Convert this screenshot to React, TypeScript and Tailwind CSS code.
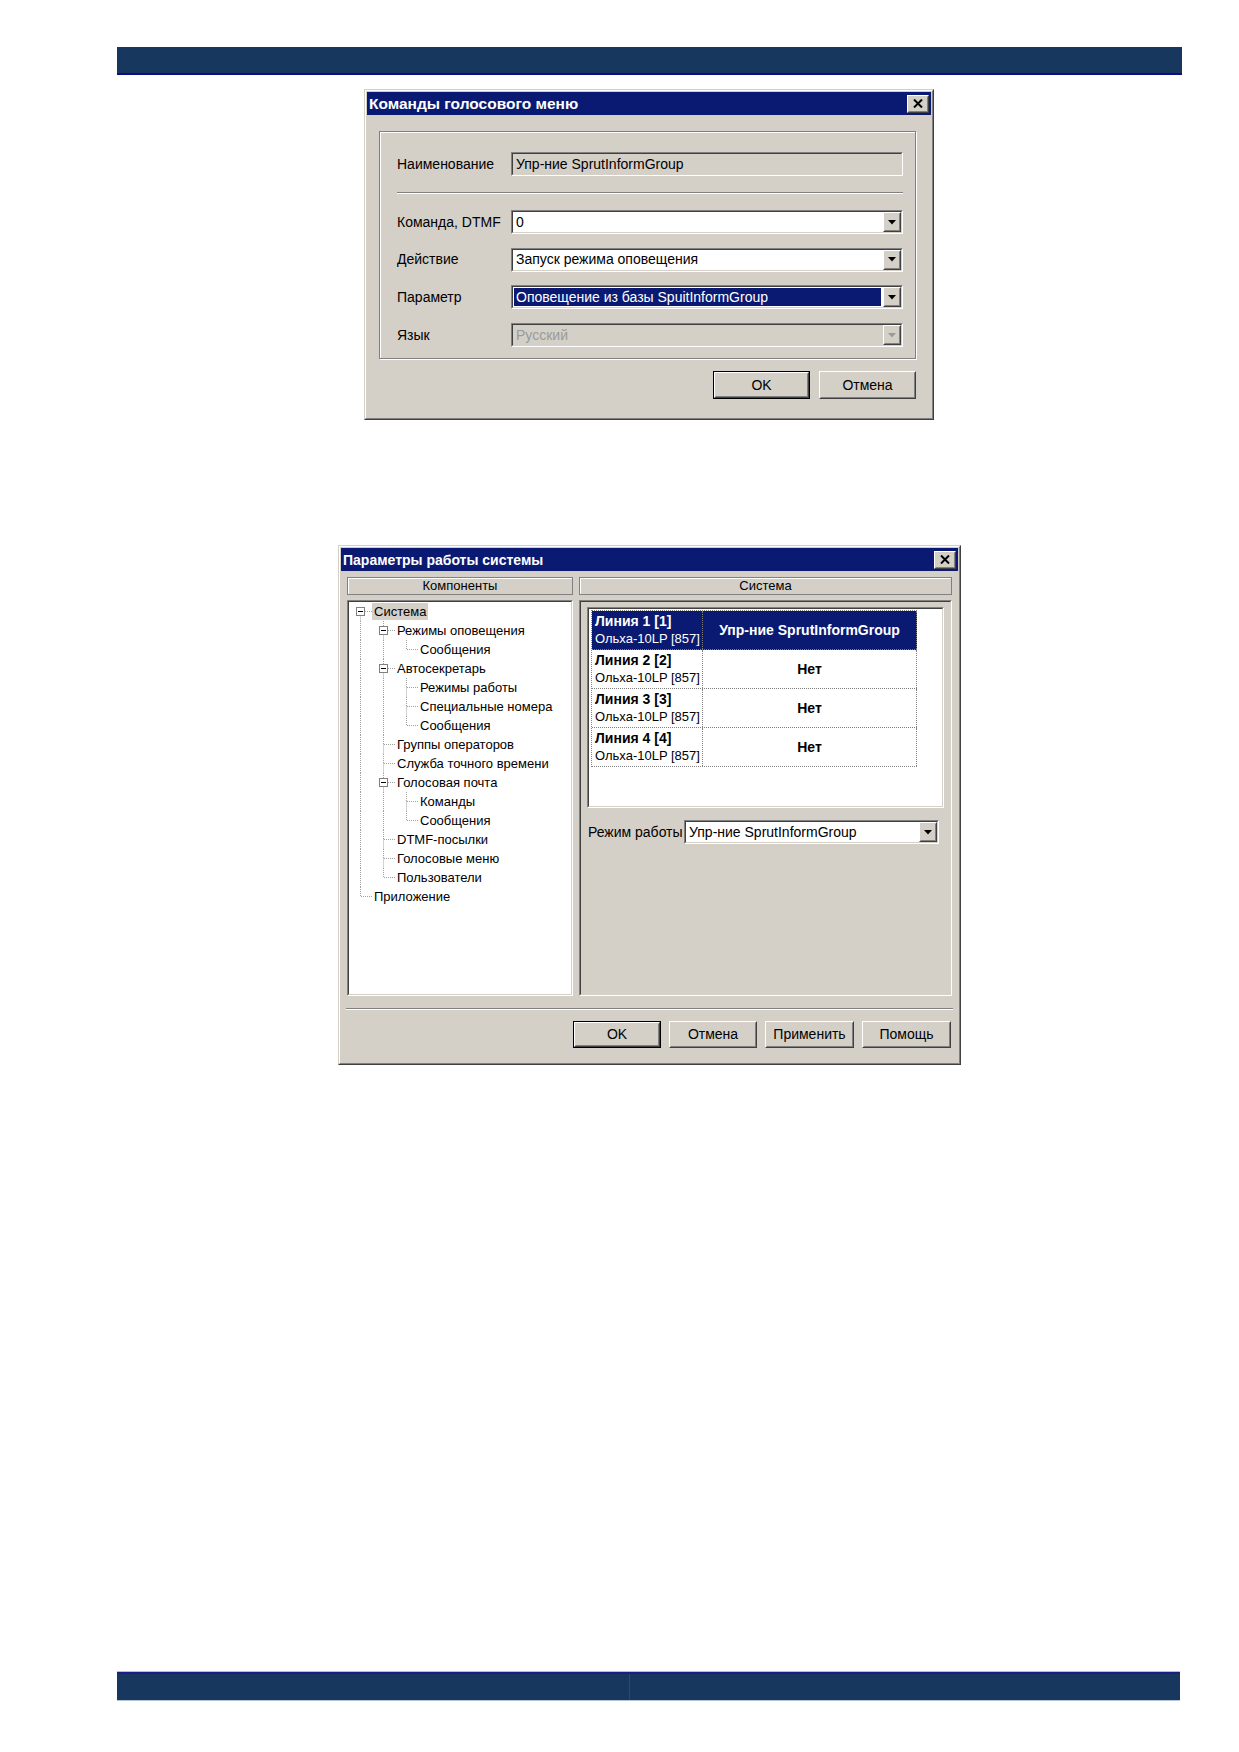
import React from 'react';

type TreeNode = { text: string; level: number; box?: boolean; first?: boolean; last?: boolean; lines: boolean[]; selected?: boolean };

const treeNodes: TreeNode[] = [
  { text: 'Система', level: 0, box: true, first: true, lines: [], selected: true },
  { text: 'Режимы оповещения', level: 1, box: true, lines: [true] },
  { text: 'Сообщения', level: 2, last: true, lines: [true, true] },
  { text: 'Автосекретарь', level: 1, box: true, lines: [true] },
  { text: 'Режимы работы', level: 2, lines: [true, true] },
  { text: 'Специальные номера', level: 2, lines: [true, true] },
  { text: 'Сообщения', level: 2, last: true, lines: [true, true] },
  { text: 'Группы операторов', level: 1, lines: [true] },
  { text: 'Служба точного времени', level: 1, lines: [true] },
  { text: 'Голосовая почта', level: 1, box: true, lines: [true] },
  { text: 'Команды', level: 2, lines: [true, true] },
  { text: 'Сообщения', level: 2, last: true, lines: [true, true] },
  { text: 'DTMF-посылки', level: 1, lines: [true] },
  { text: 'Голосовые меню', level: 1, lines: [true] },
  { text: 'Пользователи', level: 1, last: true, lines: [true] },
  { text: 'Приложение', level: 0, last: true, lines: [] },
];

const lines = [
  { name: 'Линия 1 [1]', mode: 'Упр-ние SprutInformGroup' },
  { name: 'Линия 2 [2]', mode: 'Нет' },
  { name: 'Линия 3 [3]', mode: 'Нет' },
  { name: 'Линия 4 [4]', mode: 'Нет' },
];

// classic 3d frames, two nested 1px borders each
function Raised({ className = '', children }: { className?: string; children?: React.ReactNode }) {
  return (
    <div className={`border border-t-white border-l-white border-r-[#404040] border-b-[#404040] ${className}`}>
      <div className="h-full w-full border border-t-[#d4d0c8] border-l-[#d4d0c8] border-r-[#808080] border-b-[#808080] flex items-center justify-center">
        {children}
      </div>
    </div>
  );
}

function Sunken({ className = '', inner = '', children }: { className?: string; inner?: string; children?: React.ReactNode }) {
  return (
    <div className={`border border-t-[#808080] border-l-[#808080] border-b-white border-r-white ${className}`}>
      <div className={`h-full w-full border border-t-[#404040] border-l-[#404040] border-b-[#d4d0c8] border-r-[#d4d0c8] ${inner}`}>
        {children}
      </div>
    </div>
  );
}

function Window({ title, titleSize, className = '', children }: { title: string; titleSize: string; className?: string; children: React.ReactNode }) {
  return (
    <div className={`bg-[#d4d0c8] border border-t-[#d4d0c8] border-l-[#d4d0c8] border-r-[#404040] border-b-[#404040] ${className}`}>
      <div className="h-full border border-t-white border-l-white border-r-[#808080] border-b-[#808080] p-px flex flex-col">
        <div className="h-[23px] shrink-0 bg-[#0a1a72] flex items-center justify-between pl-[2px] pr-[2px]">
          <span className={`text-white font-bold leading-none ${titleSize}`}>{title}</span>
          <Raised className="w-[22px] h-[18px] bg-[#d4d0c8]">
            <svg width="10" height="9" viewBox="0 0 10 9">
              <path d="M1 0.5 L9 8.5 M9 0.5 L1 8.5" stroke="#000" strokeWidth="2" />
            </svg>
          </Raised>
        </div>
        {children}
      </div>
    </div>
  );
}

function Arrow({ disabled }: { disabled?: boolean }) {
  return (
    <Raised className="w-[18px] h-full bg-[#d4d0c8] shrink-0">
      <svg width="8" height="5" viewBox="0 0 8 5">
        <path d="M0 0 H8 L4 4.5 Z" fill={disabled ? '#9a9a9a' : '#000'} />
      </svg>
    </Raised>
  );
}

function Combo({ value, selected, disabled, className = '' }: { value: string; selected?: boolean; disabled?: boolean; className?: string }) {
  const text = selected ? 'bg-[#0a1a72] text-white' : disabled ? 'text-[#9a9a9a]' : 'text-black';
  return (
    <Sunken className={`h-[24px] ${className}`} inner={`flex ${disabled ? 'bg-[#d4d0c8]' : 'bg-white'}`}>
      <div className="flex-1 flex p-px pr-[2px]">
        <span className={`flex-1 flex items-center pl-[2px] ${text}`}>{value}</span>
      </div>
      <Arrow disabled={disabled} />
    </Sunken>
  );
}

function Button({ label, isDefault, className = '' }: { label: string; isDefault?: boolean; className?: string }) {
  if (isDefault) {
    return (
      <div className={`border border-black ${className}`}>
        <Raised className="h-full">{label}</Raised>
      </div>
    );
  }
  return <Raised className={className}>{label}</Raised>;
}

// dotted connectors and the expand box for one indent column of the tree
function TreeCell({ kind, node }: { kind: 'pass' | 'empty' | 'own'; node: TreeNode }) {
  const dot = { stroke: '#a0a0a0', strokeWidth: 1, strokeDasharray: '1 1' };
  return (
    <svg width="23" height="19" viewBox="0 0 23 19" className="shrink-0">
      {kind === 'pass' && <line x1="11.5" y1="0" x2="11.5" y2="19" {...dot} />}
      {kind === 'own' && (
        <>
          {!node.first && <line x1="11.5" y1="0" x2="11.5" y2="9.5" {...dot} />}
          {!node.last && <line x1="11.5" y1="9.5" x2="11.5" y2="19" {...dot} />}
          <line x1={node.box ? 16 : 12} y1="9.5" x2="23" y2="9.5" {...dot} />
          {node.box && (
            <>
              <rect x="7.5" y="5.5" width="8" height="8" fill="#fff" stroke="#808080" />
              <line x1="9" y1="9.5" x2="14" y2="9.5" stroke="#000" />
            </>
          )}
        </>
      )}
    </svg>
  );
}

function Tree() {
  return (
    <div className="text-[13px]">
      {treeNodes.map((n, i) => (
        <div key={i} className="h-[19px] flex items-center">
          {n.lines.map((l, j) => (
            <TreeCell key={j} kind={l ? 'pass' : 'empty'} node={n} />
          ))}
          <TreeCell kind="own" node={n} />
          <span className={`px-[2px] leading-[17px] whitespace-nowrap ${n.selected ? 'bg-[#d4d0c8]' : ''}`}>{n.text}</span>
        </div>
      ))}
    </div>
  );
}

function VoiceMenuDialog() {
  const rows = [
    { label: 'Команда, DTMF', value: '0' },
    { label: 'Действие', value: 'Запуск режима оповещения' },
    { label: 'Параметр', value: 'Оповещение из базы SpuitInformGroup', selected: true },
    { label: 'Язык', value: 'Русский', disabled: true },
  ];
  return (
    <Window title="Команды голосового меню" titleSize="text-[15.5px]" className="ml-[364px] mt-[14px] w-[570px] h-[331px]">
      <div className="mx-[12px] mr-[15px] mt-[16px] h-[228px] border border-[#808080] shadow-[inset_1px_1px_0_#fff,1px_1px_0_#fff] pl-[17px] pr-[12px] pt-[20px]">
        <div className="flex items-center h-[24px]">
          <span className="w-[114px] shrink-0">Наименование</span>
          <Sunken className="flex-1 h-[24px]" inner="bg-[#d4d0c8] flex items-center pl-[3px]">
            Упр-ние SprutInformGroup
          </Sunken>
        </div>
        <div className="my-[16px] h-[2px] border-t border-t-[#808080] border-b border-b-white" />
        <div className="flex flex-col gap-[13.7px]">
          {rows.map(r => (
            <div key={r.label} className="flex items-center">
              <span className="w-[114px] shrink-0">{r.label}</span>
              <Combo value={r.value} selected={r.selected} disabled={r.disabled} className="flex-1" />
            </div>
          ))}
        </div>
      </div>
      <div className="flex justify-end gap-[9px] mr-[15px] mt-[12px]">
        <Button label="OK" isDefault className="w-[97px] h-[28px]" />
        <Button label="Отмена" className="w-[97px] h-[28px]" />
      </div>
    </Window>
  );
}

function SystemDialog() {
  return (
    <Window title="Параметры работы системы" titleSize="text-[14px]" className="ml-[338px] mt-[125px] w-[623px] h-[520px]">
      <div className="flex gap-[6px] ml-[6px] mr-[6px] mt-[6px]">
        <div className="w-[226px] flex flex-col gap-[5px]">
          <div className="h-[18px] border border-[#808080] shadow-[inset_1px_1px_0_#fff] flex items-center justify-center text-[13px]">
            Компоненты
          </div>
          <Sunken className="h-[396px]" inner="bg-white">
            <Tree />
          </Sunken>
        </div>
        <div className="flex-1 flex flex-col gap-[5px]">
          <div className="h-[18px] border border-[#808080] shadow-[inset_1px_1px_0_#fff] flex items-center justify-center text-[13px]">
            Система
          </div>
          <Sunken className="h-[396px]" inner="px-[6px] pt-[5px]">
            <Sunken className="h-[201px]" inner="bg-white pl-[2px] pt-px">
              <div className="w-[326px] border-t border-l border-dotted border-[#808080]">
                {lines.map((l, i) => {
                  const sel = i === 0;
                  return (
                    <div key={l.name} className={`h-[39px] flex border-b border-dotted border-[#808080] ${sel ? 'bg-[#0a1a72] text-white' : ''}`}>
                      <div className="w-[111px] border-r border-dotted border-[#808080] pl-[3px] flex flex-col justify-center leading-[18px]">
                        <span className="font-bold">{l.name}</span>
                        <span className="text-[13px]">Ольха-10LP [857]</span>
                      </div>
                      <div className="flex-1 border-r border-dotted border-[#808080] flex items-center justify-center font-bold">
                        {l.mode}
                      </div>
                    </div>
                  );
                })}
              </div>
            </Sunken>
            <div className="flex items-center mt-[12px] pl-px pr-[5px]">
              <span className="w-[96px] shrink-0">Режим работы</span>
              <Combo value="Упр-ние SprutInformGroup" className="flex-1" />
            </div>
          </Sunken>
        </div>
      </div>
      <div className="mx-[5px] mt-[12px] h-[2px] border-t border-t-[#808080] border-b border-b-white" />
      <div className="flex justify-end gap-[8px] mr-[7px] mt-[11px]">
        <Button label="OK" isDefault className="w-[88px] h-[27px]" />
        <Button label="Отмена" className="w-[88px] h-[27px]" />
        <Button label="Применить" className="w-[89px] h-[27px]" />
        <Button label="Помощь" className="w-[89px] h-[27px]" />
      </div>
    </Window>
  );
}

export default function App() {
  return (
    <div className="w-[1239px] h-[1752px] bg-white flex flex-col font-['Liberation_Sans',Arial,sans-serif] text-[14px] text-black">
      <div className="ml-[117px] mt-[47px] w-[1065px] h-[28px] bg-[#17375e] border-b-2 border-[#0c0c86]" />
      <VoiceMenuDialog />
      <SystemDialog />
      <div className="ml-[117px] mt-[607px] w-[1063px] h-[28px] flex border-t-2 border-[#1c1c8a] shadow-[0_-1px_0_#b8bce0,0_1px_0_#b8c4d4]">
        <div className="w-[512px] bg-[#17375e]" />
        <div className="flex-1 bg-[#17375e] border-l border-[#2c4a70]" />
      </div>
    </div>
  );
}
